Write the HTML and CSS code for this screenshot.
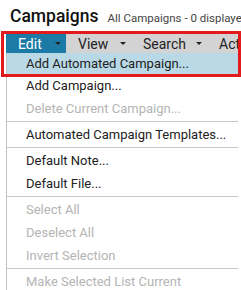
FILE: index.html
```html
<!DOCTYPE html>
<html lang="en">
<head>
    <meta charset="UTF-8">
    <title>Campaigns</title>
    <link rel="stylesheet" href="styles.css">
</head>
<body>
    <div class="page-header">
        <h1>Campaigns</h1>
        <span class="subtitle">All Campaigns - 0 displayed</span>
    </div>

    <div class="menu-area">
        <div class="menubar">
            <div class="menu-btn edit active">Edit <span class="caret"></span></div>
            <div class="menu-btn view">View <span class="caret"></span></div>
            <div class="menu-btn search">Search <span class="caret"></span></div>
            <div class="menu-btn actions">Actions <span class="caret"></span></div>
        </div>

        <ul class="dropdown">
            <li class="item hover">Add Automated Campaign...</li>
            <li class="item">Add Campaign...</li>
            <li class="item disabled">Delete Current Campaign...</li>
            <li class="sep"></li>
            <li class="item">Automated Campaign Templates...</li>
            <li class="sep"></li>
            <li class="item">Default Note...</li>
            <li class="item">Default File...</li>
            <li class="sep"></li>
            <li class="item disabled">Select All</li>
            <li class="item disabled">Deselect All</li>
            <li class="item disabled">Invert Selection</li>
            <li class="sep"></li>
            <li class="item disabled">Make Selected List Current</li>
        </ul>

        <!-- highlight frame drawn over the menu -->
        <div class="highlight"></div>
    </div>
</body>
</html>
```

FILE: styles.css
```css
body {
    margin: 0;
    font-family: Roboto, "Liberation Sans", sans-serif;
    background: #fff;
    color: #222;
    overflow: hidden;
    width: 241px;
}

.page-header {
    display: flex;
    align-items: baseline;
    white-space: nowrap;
    overflow: hidden;
    padding: 5px 0 0 10px;
    height: 30px;
    box-sizing: border-box;
}

h1 {
    margin: 0;
    font-size: 17.5px;
    font-weight: 500;
    color: #111;
    line-height: 22px;
}

.subtitle {
    margin-left: 9px;
    font-size: 11.5px;
    color: #444;
}

.menu-area {
    position: relative;
    padding-top: 4px;
}

.menubar {
    display: flex;
    margin-left: 6px;
    height: 19px;
    background: #d3d3d3;
    white-space: nowrap;
    overflow: hidden;
}

.menu-btn {
    flex-shrink: 0;
    display: flex;
    align-items: center;
    justify-content: space-between;
    box-sizing: border-box;
    padding: 0 5px 0 12px;
    font-size: 14px;
    color: #222;
}

.menu-btn.edit { width: 60px; }
.menu-btn.view { width: 65px; }
.menu-btn.search { width: 76px; }
.menu-btn.actions { width: 80px; }

.menu-btn.active {
    background: #1b7aa6;
    color: #fff;
}

.caret {
    display: inline-block;
    width: 0;
    height: 0;
    border-left: 3px solid transparent;
    border-right: 3px solid transparent;
    border-top: 3px solid #222;
}

.dropdown {
    list-style: none;
    margin: 0 0 0 6px;
    padding: 0;
    width: 231px;
    border-left: 1px solid #c4c4c4;
}

.item {
    height: 23px;
    line-height: 23px;
    padding-left: 19px;
    font-size: 13px;
    color: #222;
    white-space: nowrap;
}

.item.hover {
    background: #b9d9e6;
    height: 21px;
    line-height: 21px;
}

.item.disabled {
    color: #b4b4b4;
}

.sep {
    height: 1px;
    background: #c6c6c6;
    margin: 1px 0;
}

.highlight {
    position: absolute;
    left: 1px;
    top: 1px;
    width: 240px;
    height: 46px;
    box-sizing: border-box;
    border: 3px solid #e3191c;
}
```
